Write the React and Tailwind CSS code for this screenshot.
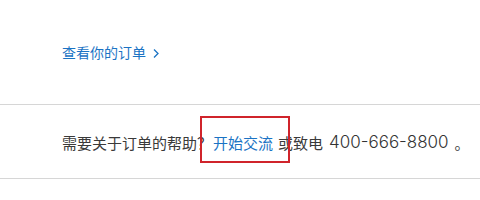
export default function App() {
  const cjk = { fontFamily: '"Noto Sans CJK SC", "Noto Sans", sans-serif' };
  return (
    <div className="w-[480px] h-[200px] bg-white overflow-hidden" style={cjk}>
      {/* order link */}
      <div className="h-[104px] flex items-center pl-[62px]">
        <a className="flex items-center gap-[6px] text-[14px] text-[#1a73c4] leading-none">
          <span>查看你的订单</span>
          <svg width="8" height="11" viewBox="0 0 8 11" fill="none" className="mt-[2px]">
            <path d="M2 1.5 L6 5.5 L2 9.5" stroke="#1a73c4" strokeWidth="1.3" />
          </svg>
        </a>
      </div>
      <div className="h-px bg-[#d6d6d6]" />

      {/* help row */}
      <div className="h-[73px] flex items-center pl-[62px] pt-[2px] text-[15px] text-[#3a3a3a] leading-none whitespace-nowrap">
        <span>需要关于订单的帮助？</span>
        <span className="relative ml-[1px] text-[#1a73c4]">
          开始交流
          <span className="absolute left-[-13px] right-[-17px] top-[-19px] bottom-[-13px] border-2 border-[#d0242b]" />
        </span>
        <span className="ml-[5px]">或致电</span>
        <span className="ml-[6px] text-[17px] font-['Inter'] font-light text-[#333]">400-666-8800</span>
        <span className="ml-[6px]">。</span>
      </div>
      <div className="h-px bg-[#d6d6d6]" />
    </div>
  );
}
